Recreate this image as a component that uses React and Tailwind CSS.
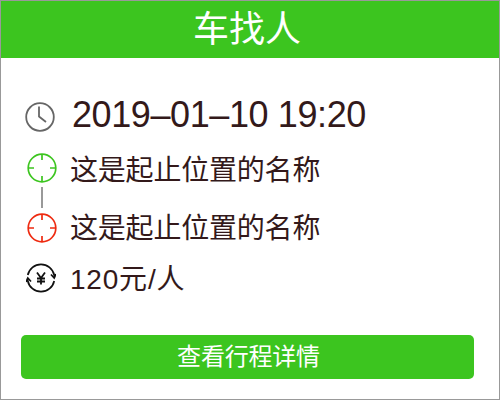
const font = { fontFamily: '"Liberation Sans", "Noto Sans CJK SC", sans-serif' };

function Clock() {
  return (
    <svg width="30" height="30" viewBox="0 0 30 30" fill="none" stroke="#666" strokeWidth="1.8">
      <circle cx="15" cy="15" r="13.8" />
      <path d="M14 4.500V14.500l7 5.500" />
    </svg>
  );
}

function Target({ color }) {
  return (
    <svg width="30" height="30" viewBox="0 0 30 30" fill="none" stroke={color} strokeWidth="1.7">
      <circle cx="15" cy="15" r="13.800" />
      <path d="M15 1v6M15 23v6M1 15h6M23 15h6" />
    </svg>
  );
}

function Money() {
  return (
    <svg width="30" height="30" viewBox="0 0 30 30" fill="none" stroke="#111" strokeWidth="1.7">
      <path d="M1.800 12A13.500 13.500 0 0 1 28.200 12V15" />
      <path d="M28.200 18A13.500 13.500 0 0 1 1.800 18V15" />
      <path d="M25 11.500l3.200 3.500 1.800-4M5 18.500l-3.200-3.500-1.800 4" />
      <path d="M11 9.500l4 5.500 4-5.500M15 15v6.500M11 15.500h8M11 18.500h8" strokeWidth="1.800" />
    </svg>
  );
}

export default function App() {
  return (
    <div style={font} className="flex h-[400px] w-[500px] flex-col border border-[#999] bg-white text-[#33191a]">
      <div className="flex h-[57px] items-center justify-center bg-[#3cc51f] pr-[6px] text-[36px] text-white">车找人</div>
      <div className="flex flex-1 flex-col pl-[24px] pt-[44px]">
        <div className="flex h-[30px] items-center gap-[17px]">
          <Clock />
          <span className="-mt-[4px] text-[36px] tracking-[-0.4px]">2019–01–10 19:20</span>
        </div>
        <div className="mt-[21px] ml-[2px] flex h-[30px] items-center gap-[13px]">
          <Target color="#3cc51f" />
          <span className="mt-[5px] text-[28px] tracking-[-0.2px]">这是起止位置的名称</span>
        </div>
        <div className="mt-[4px] mb-[5px] ml-[16px] h-[21px] w-[2px] bg-[#999]" />
        <div className="ml-[2px] flex h-[30px] items-center gap-[13px]">
          <Target color="#ee2a10" />
          <span className="mt-[1px] text-[28px] tracking-[-0.2px]">这是起止位置的名称</span>
        </div>
        <div className="mt-[20px] ml-[1px] flex h-[30px] items-center gap-[14px]">
          <Money />
          <span className="mt-[3px] text-[28px] tracking-[0.8px]">120元/人</span>
        </div>
      </div>
      <div className="px-[20px] pb-[20px]">
        <button className="flex h-[44px] w-[453px] items-center justify-center rounded-[5px] bg-[#3cc51f] pl-[2px] text-[24px] tracking-[-0.2px] text-white">查看行程详情</button>
      </div>
    </div>
  );
}
